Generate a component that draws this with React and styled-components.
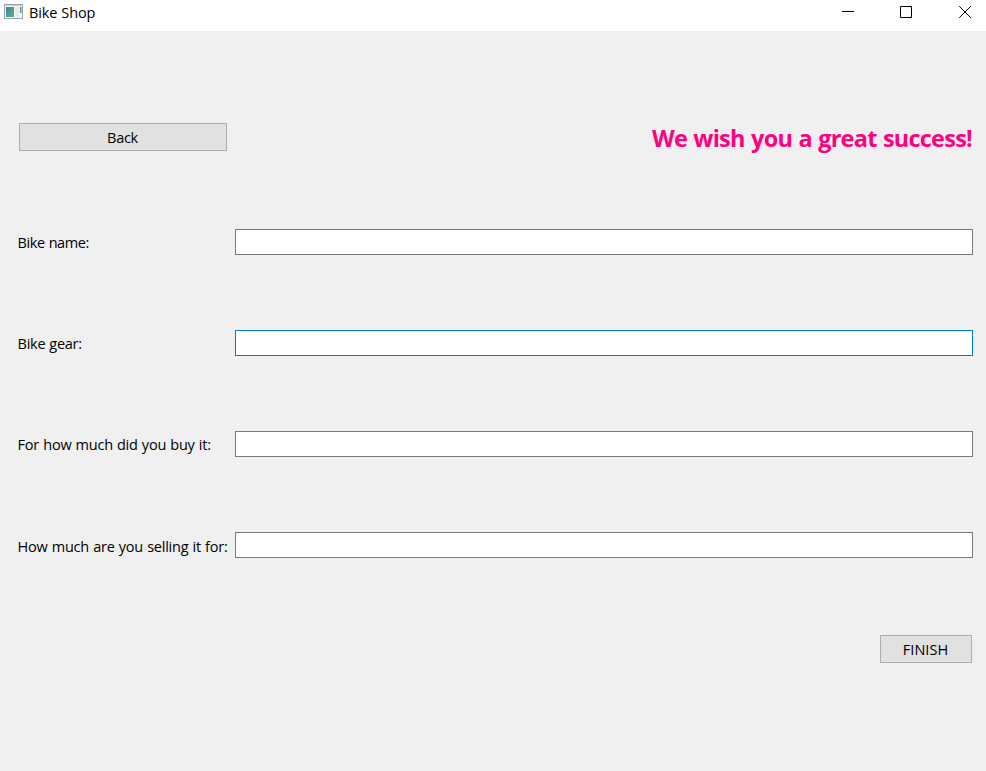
import React from 'react';
import styled, { createGlobalStyle } from 'styled-components';

const GlobalStyle = createGlobalStyle`
  * { box-sizing: border-box; }
  body {
    margin: 0;
    background: #f0f0f0;
    color: #000;
    font-family: "Open Sans", "Noto Sans", sans-serif;
    font-size: 14.5px;
  }
`;

const Window = styled.div`
  display: flex;
  flex-direction: column;
  width: 986px;
  height: 771px;
  overflow: hidden;
  background: #f0f0f0;
`;

const TitleBar = styled.header`
  display: flex;
  align-items: flex-start;
  flex: none;
  height: 31px;
  padding-left: 4px;
  background: #fff;
`;

const AppIcon = styled.svg`
  width: 19px;
  height: 16px;
  margin-top: 4px;
`;

const Title = styled.span`
  flex: 1;
  margin-left: 6px;
  line-height: 25px;
  letter-spacing: -0.16px;
  word-spacing: 0.6px;
`;

const Controls = styled.div`
  display: flex;
  gap: 12px;
`;

const ControlButton = styled.button`
  display: grid;
  place-items: center;
  width: 46px;
  height: 24px;
  padding: 0;
  border: 0;
  background: none;

  svg {
    width: 14px;
    height: 14px;
    fill: none;
    stroke: #000;
  }

  &:last-child {
    width: 45px;
    padding-left: 3px;
  }
`;

const Form = styled.main`
  display: flex;
  flex-direction: column;
  padding: 92px 13px 0 17px;
`;

const Header = styled.div`
  display: flex;
  justify-content: space-between;
  height: 28px;
  margin-bottom: 78px;
  padding: 0 1px 0 2px;
`;

const Heading = styled.h1`
  margin: 0;
  color: #ff007f;
  font-size: 23.5px;
  font-weight: 700;
  line-height: 31px;
  letter-spacing: -0.77px;
  word-spacing: 1px;
  white-space: nowrap;
`;

const PushButton = styled.button`
  width: ${({ $width }) => $width}px;
  height: 28px;
  padding: 2px 1px 0 0;
  border: 1px solid #adadad;
  border-radius: 0;
  background: #e1e1e1;
  color: #000;
  font: inherit;
  line-height: 24px;
  letter-spacing: ${({ $tracking }) => $tracking}px;
`;

const Fields = styled.div`
  display: flex;
  flex-direction: column;
  gap: 75px;
`;

const Row = styled.div`
  display: grid;
  grid-template-columns: 218px 1fr;
  height: 26px;
`;

const Label = styled.label`
  padding: ${({ $drop }) => $drop || 0}px 0 0 0.6px;
  line-height: 28px;
  letter-spacing: ${({ $tracking }) => $tracking}px;
  word-spacing: 0.6px;
  white-space: nowrap;
`;

const Input = styled.input`
  width: 100%;
  height: 26px;
  padding: 0 4px;
  border: 1px solid ${({ $active }) => ($active ? '#0078d7' : '#7a7a7a')};
  border-radius: 0;
  outline: none;
  background: #fff;
  font: inherit;
`;

const Footer = styled.div`
  display: flex;
  justify-content: flex-end;
  margin-top: 77px;
  padding-right: 1px;
`;

const fields = [
  { id: 'name', label: 'Bike name:', tracking: -0.42 },
  { id: 'gear', label: 'Bike gear:', tracking: -0.28, active: true },
  { id: 'bought', label: 'For how much did you buy it:', tracking: -0.22 },
  { id: 'selling', label: 'How much are you selling it for:', tracking: -0.22, drop: 1 },
];

export default function App() {
  return (
    <>
      <GlobalStyle />
      <Window>
        <TitleBar>
          <AppIcon viewBox="0 0 19 16" aria-hidden="true">
            <defs>
              <linearGradient id="pane" x1="0" y1="0" x2="1" y2="1">
                <stop offset="0" stopColor="#477fa5" />
                <stop offset="1" stopColor="#57b487" />
              </linearGradient>
            </defs>
            <rect x="0.5" y="0.5" width="18" height="14" fill="#f4f4f4" stroke="#a0a4a7" />
            <path d="M1 1.5h17" stroke="#c9cdd0" />
            <rect x="2" y="3" width="8" height="10" fill="url(#pane)" />
            <rect x="11" y="3" width="4" height="10" fill="#eaeaea" />
            <rect x="16" y="3" width="1.5" height="6" fill="url(#pane)" />
          </AppIcon>
          <Title>Bike Shop</Title>
          <Controls>
            <ControlButton aria-label="Minimize">
              <svg viewBox="0 0 14 14"><path d="M1 6.5h12" /></svg>
            </ControlButton>
            <ControlButton aria-label="Maximize">
              <svg viewBox="0 0 14 14"><path d="M1.5 1.5h11v11h-11z" /></svg>
            </ControlButton>
            <ControlButton aria-label="Close">
              <svg viewBox="0 0 14 14"><path d="M1.2 1.2l11.6 11.6M12.8 1.2L1.2 12.8" /></svg>
            </ControlButton>
          </Controls>
        </TitleBar>
        <Form>
          <Header>
            <PushButton $width={208} $tracking={-0.3}>Back</PushButton>
            <Heading>We wish you a great success!</Heading>
          </Header>
          <Fields>
            {fields.map((f) => (
              <Row key={f.id}>
                <Label htmlFor={f.id} $tracking={f.tracking} $drop={f.drop}>{f.label}</Label>
                <Input id={f.id} $active={f.active} />
              </Row>
            ))}
          </Fields>
          <Footer>
            <PushButton $width={92} $tracking={0.05}>FINISH</PushButton>
          </Footer>
        </Form>
      </Window>
    </>
  );
}
